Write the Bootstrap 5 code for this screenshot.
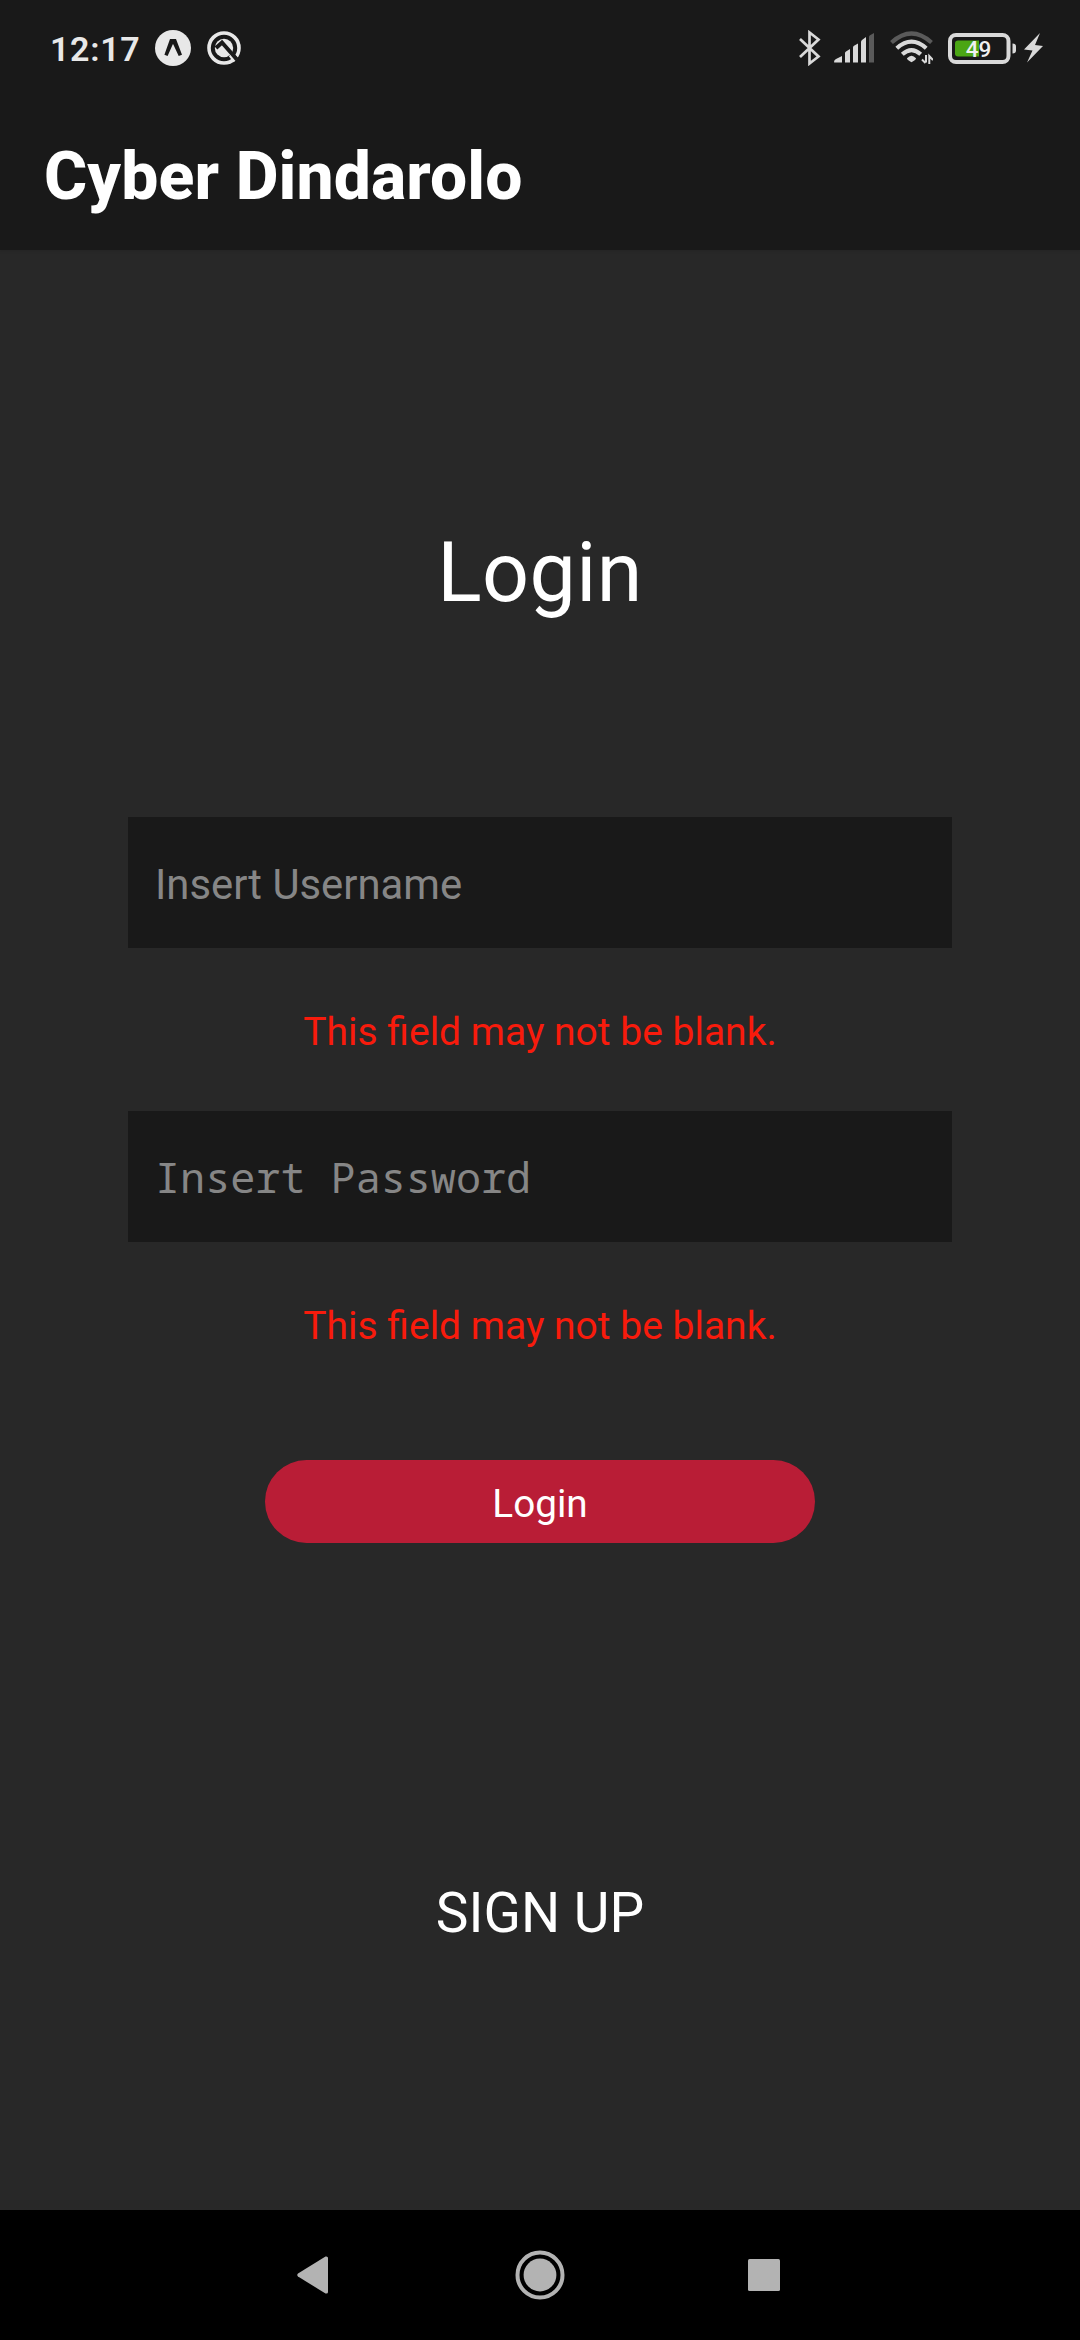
<!DOCTYPE html>
<html lang="en">
<head>
<meta charset="utf-8">
<meta name="viewport" content="width=device-width, initial-scale=1">
<title>Cyber Dindarolo</title>
<link href="https://cdn.jsdelivr.net/npm/bootstrap@5.3.0/dist/css/bootstrap.min.css" rel="stylesheet">
<style>
  body { font-family: Roboto, sans-serif; background: #282828; color: #fff; height: 2340px; }
  svg { display: block; flex: none; }
  .app-header { background: #191919; height: 250px; box-shadow: 0 1px 3px rgba(0,0,0,.12); }
  .status-bar { height: 96px; padding: 0 37px 0 50px; color: #e8e8e8; }
  .clock { font-size: 34px; font-weight: 600; line-height: 40px; letter-spacing: .7px; width: 105px; padding-top: 1px; }
  .app-title { font-size: 66px; line-height: 78px; font-weight: 800; margin: 42px 0 0 44px; letter-spacing: .12px; }
  .login-heading { font-size: 82.5px; line-height: 98px; font-weight: 400; margin: 274px 0 195px; letter-spacing: .4px; }
  .login-form { width: 824px; }
  .form-control.field, .form-control.field:focus { height: 131px; background: #191919; border: 0; border-radius: 0; color: #fff; font-size: 41.8px; padding: 3px 27px 0; box-shadow: none; }
  .form-control.field::placeholder { color: #868686; opacity: 1; }
  .form-control.field-mono, .form-control.field-mono:focus { font-family: "Noto Sans Mono", "DejaVu Sans Mono", monospace; padding-top: 0; }
  .field-error { color: #f81b0c; font-size: 39px; line-height: 46px; margin: 61px 0 56px; }
  .btn.btn-login { width: 550px; height: 83px; margin-top: 55px; background: #b91d36; border: 0; border-radius: 42px; color: #fff; font-size: 38.7px; line-height: 46px; padding: 4px 0 0; }
  .sign-up { font-size: 55px; line-height: 64px; margin-top: 338px; color: #fff; }
  .system-nav { background: #000; height: 130px; padding: 0 300px 0 297px; }
  .nav-home { margin-left: 3px; }
</style>
</head>
<body class="d-flex flex-column overflow-hidden">
<header class="app-header flex-shrink-0">
  <div class="status-bar d-flex align-items-center">
    <div class="clock">12:17</div>
    <svg width="36" height="36" viewBox="0 0 36 36"><circle cx="18" cy="18" r="18" fill="#e8e8e8"/><path d="M9.400 24.800 15 9h6l6 15.800-3.300 1.300L18.200 14.300h-.4L12.600 26z" fill="#191919"/></svg>
    <svg class="ms-3" width="34" height="34" viewBox="0 0 34 34" fill="none"><circle cx="17" cy="17" r="15" stroke="#e8e8e8" stroke-width="3.600"/><circle cx="17" cy="17" r="9.200" fill="#e8e8e8"/><path d="m9 17 6-5.500L29.500 28" stroke="#191919" stroke-width="4"/><path d="M25.500 24.500l4 4.200" stroke="#191919" stroke-width="4.500"/><path d="M22.500 24.500l5 6" stroke="#e8e8e8" stroke-width="2"/></svg>
    <svg class="ms-auto" width="22" height="36" viewBox="0 0 22 36" fill="none" stroke="#d9d9d9" stroke-width="2.700"><path d="M1 9 19.500 26.500 10.500 33.500V2.500l9 7L1 27"/></svg>
    <svg style="margin-left:13px" width="41" height="30" viewBox="0 0 41 30" fill="#d9d9d9"><path d="M0 29q0-2 2-3l6-3v6.500H1Q0 29.500 0 29zM11 20q0-1 1-1.500L16 16v13.500h-5zM19 14.500q0-1 1-1.700l4-2.300v19h-5zM27 9q0-1 1-2l4-3v25.500h-5z"/><path d="M35 4q0-1 1-1.800L40 0v29.500h-5z" fill="#5a5a5a"/></svg>
    <svg style="margin-left:15px" width="43" height="34" viewBox="0 0 43 34" fill="none" stroke-width="4.200"><path d="M1.500 11.500Q21.500-6.500 41.500 11.500" stroke="#5a5a5a"/><path d="M6.800 17.200Q21.500 4 36.200 17.200M12.300 23.300Q21.500 15 30.700 23.300" stroke="#d9d9d9"/><path d="M17 27.300q4.500-5 9 0 .3 1.500-4.500 4-4.800-2.500-4.500-4z" fill="#d9d9d9"/><path d="M36 24v7.500M32 28.500l3.500 3.500M39.300 33v-8l3.700 4" stroke="#d9d9d9" stroke-width="2"/></svg>
    <svg style="margin-left:15px" width="69" height="31" viewBox="0 0 69 31"><rect x="2" y="2" width="58.500" height="27" rx="6" fill="none" stroke="#d9d9d9" stroke-width="4"/><path d="M10 7.500h21v16H10q-3 0-3-3v-10q0-3 3-3z" fill="#4ba614"/><path d="M64.500 10.500q3.500 0 3.500 3v4q0 3-3.500 3z" fill="#d9d9d9"/><text x="30.500" y="23.500" text-anchor="middle" font-family="Roboto" font-size="22.500" font-weight="500" fill="#f0f0f0">49</text></svg>
    <svg style="margin-left:7px" width="19" height="30" viewBox="0 0 19 30"><path d="M16 0 0 16.500 8.500 17.500 3 29.500 19 13 11 12z" fill="#d9d9d9"/></svg>
  </div>
  <h1 class="app-title">Cyber Dindarolo</h1>
</header>
<main class="flex-grow-1 d-flex flex-column align-items-center text-center">
  <h2 class="login-heading">Login</h2>
  <form class="login-form">
    <input class="form-control field" type="text" placeholder="Insert Username" aria-label="Insert Username">
    <p class="field-error">This field may not be blank.</p>
    <input class="form-control field field-mono" type="password" placeholder="Insert Password" aria-label="Insert Password">
    <p class="field-error">This field may not be blank.</p>
    <button class="btn btn-login" type="button">Login</button>
  </form>
  <a class="sign-up text-decoration-none" href="#">SIGN UP</a>
</main>
<nav class="system-nav flex-shrink-0 d-flex align-items-center justify-content-between">
  <svg width="31" height="38" viewBox="0 0 31 38" fill="#b3b3b3"><path d="M1 17.500 28.500.5Q31 0 31 2v34q0 2-2.500 1.500L1 20.500q-1.500-1.500 0-3z"/></svg>
  <svg class="nav-home" width="50" height="50" viewBox="0 0 50 50"><circle cx="25" cy="25" r="22.500" fill="none" stroke="#b3b3b3" stroke-width="4"/><circle cx="25" cy="25" r="16.400" fill="#b3b3b3"/></svg>
  <svg width="32" height="32" viewBox="0 0 32 32"><rect width="32" height="32" rx="1.500" fill="#b3b3b3"/></svg>
</nav>
<script src="https://cdn.jsdelivr.net/npm/bootstrap@5.3.0/dist/js/bootstrap.bundle.min.js"></script>
</body>
</html>
